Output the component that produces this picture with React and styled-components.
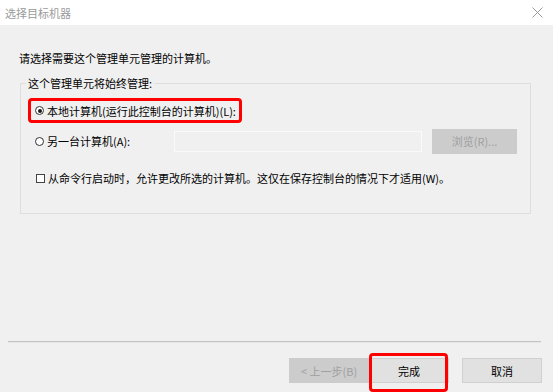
import styled, { createGlobalStyle } from "styled-components";

const GlobalStyle = createGlobalStyle`
  html, body {
    margin: 0;
    padding: 0;
  }
  body {
    width: 553px;
    height: 392px;
    overflow: hidden;
    background: #f0f0f0;
    font-family: "Noto Sans CJK SC", "Microsoft YaHei", sans-serif;
    font-size: 11px;
    color: #000;
  }
`;

const Window = styled.div`
  display: flex;
  flex-direction: column;
  height: 392px;
`;

const TitleBar = styled.div`
  display: flex;
  align-items: center;
  justify-content: space-between;
  height: 25px;
  padding: 0 10px 0 5px;
  background: #fff;
  flex-shrink: 0;
`;

const Title = styled.span`
  color: #9a9a9a;
  font-size: 11px;
  line-height: 14px;
`;

const Body = styled.div`
  padding: 0 22px 0 20px;
`;

const Instruction = styled.p`
  margin: 26px 0 0 -1px;
  line-height: 14px;
`;

const Group = styled.fieldset`
  margin: 11px 0 0;
  padding: 8px 0 25px;
  border: 1px solid #dedede;
  min-width: 0;
`;

const Legend = styled.legend`
  margin-left: 5px;
  padding: 0 2px;
  line-height: 14px;
`;

const Row = styled.div`
  display: flex;
  align-items: center;
  height: ${(p) => p.$h}px;
  margin-top: ${(p) => p.$mt || 0}px;
  padding-left: ${(p) => p.$pl || 0}px;
`;

const Highlight = styled.label`
  display: flex;
  align-items: center;
  gap: 3px;
  box-sizing: border-box;
  width: 214px;
  height: 25px;
  margin-left: 7px;
  padding-left: 4px;
  border: 3px solid #ff0000;
  border-radius: 4px;
`;

const Option = styled.label`
  display: flex;
  align-items: center;
  gap: 3px;
  width: ${(p) => p.$w || "auto"};
`;

const Radio = styled.span`
  position: relative;
  width: 9px;
  height: 9px;
  box-sizing: border-box;
  border: 1px solid #333;
  border-radius: 50%;
  background: #fff;
  flex-shrink: 0;
  &::after {
    content: "";
    display: ${(p) => (p.$checked ? "block" : "none")};
    position: absolute;
    left: 1.5px;
    top: 1.5px;
    width: 4px;
    height: 4px;
    border-radius: 50%;
    background: #1a1a1a;
  }
`;

const Check = styled.span`
  width: 9px;
  height: 9px;
  box-sizing: border-box;
  border: 1px solid #444;
  background: #fff;
  flex-shrink: 0;
`;

const TextBox = styled.div`
  box-sizing: border-box;
  width: 248px;
  height: 21px;
  border: 1px solid #fafafa;
  background: #f0f0f0;
`;

const FlatButton = styled.div`
  display: flex;
  align-items: center;
  justify-content: center;
  box-sizing: border-box;
  width: ${(p) => p.$w || 80}px;
  height: 25px;
  margin-left: ${(p) => p.$ml || 0}px;
  background: ${(p) => (p.$disabled ? "#cccccc" : "#e1e1e1")};
  border: 1px solid ${(p) => (p.$disabled ? "#cccccc" : "#d0d0d0")};
  color: ${(p) => (p.$disabled ? "#a0a0a0" : "#000")};
`;

const Footer = styled.div`
  margin-top: auto;
  padding-bottom: 9px;
`;

const Separator = styled.div`
  height: 1px;
  margin: 0 12px 0 8px;
  background: #c4c4c4;
  box-shadow: 0 1px 0 #e6e6e6;
`;

const ButtonRow = styled.div`
  display: flex;
  justify-content: flex-end;
  margin-top: 16px;
  padding-right: 11px;
`;

const Marked = styled.div`
  position: relative;
  &::after {
    content: "";
    position: absolute;
    left: 0;
    top: -5px;
    width: 79px;
    height: 39px;
    box-sizing: border-box;
    border: 3px solid #ff0000;
    border-radius: 4px;
  }
`;

function CloseIcon() {
  return (
    <svg width="11" height="11" viewBox="0 0 11 11">
      <path d="M0.5 0.5 L10.5 10.5 M10.5 0.5 L0.5 10.5" stroke="#9a9a9a" strokeWidth="1" />
    </svg>
  );
}

export default function App() {
  return (
    <>
      <GlobalStyle />
      <Window>
        <TitleBar>
          <Title>选择目标机器</Title>
          <CloseIcon />
        </TitleBar>
        <Body>
          <Instruction>请选择需要这个管理单元管理的计算机。</Instruction>
          <Group>
            <Legend>这个管理单元将始终管理:</Legend>
            <Row $h={25}>
              <Highlight>
                <Radio $checked />
                本地计算机(运行此控制台的计算机)(L):
              </Highlight>
            </Row>
            <Row $h={26} $mt={5} $pl={14}>
              <Option $w="139px">
                <Radio />
                另一台计算机(A):
              </Option>
              <TextBox />
              <FlatButton $disabled $w={85} $ml={10}>浏览(R)...</FlatButton>
            </Row>
            <Row $h={20} $mt={14} $pl={15}>
              <Option>
                <Check />
                从命令行启动时，允许更改所选的计算机。这仅在保存控制台的情况下才适用(W)。
              </Option>
            </Row>
          </Group>
        </Body>
        <Footer>
          <Separator />
          <ButtonRow>
            <FlatButton $disabled>&lt; 上一步(B)</FlatButton>
            <Marked>
              <FlatButton>完成</FlatButton>
            </Marked>
            <FlatButton $ml={13}>取消</FlatButton>
          </ButtonRow>
        </Footer>
      </Window>
    </>
  );
}
